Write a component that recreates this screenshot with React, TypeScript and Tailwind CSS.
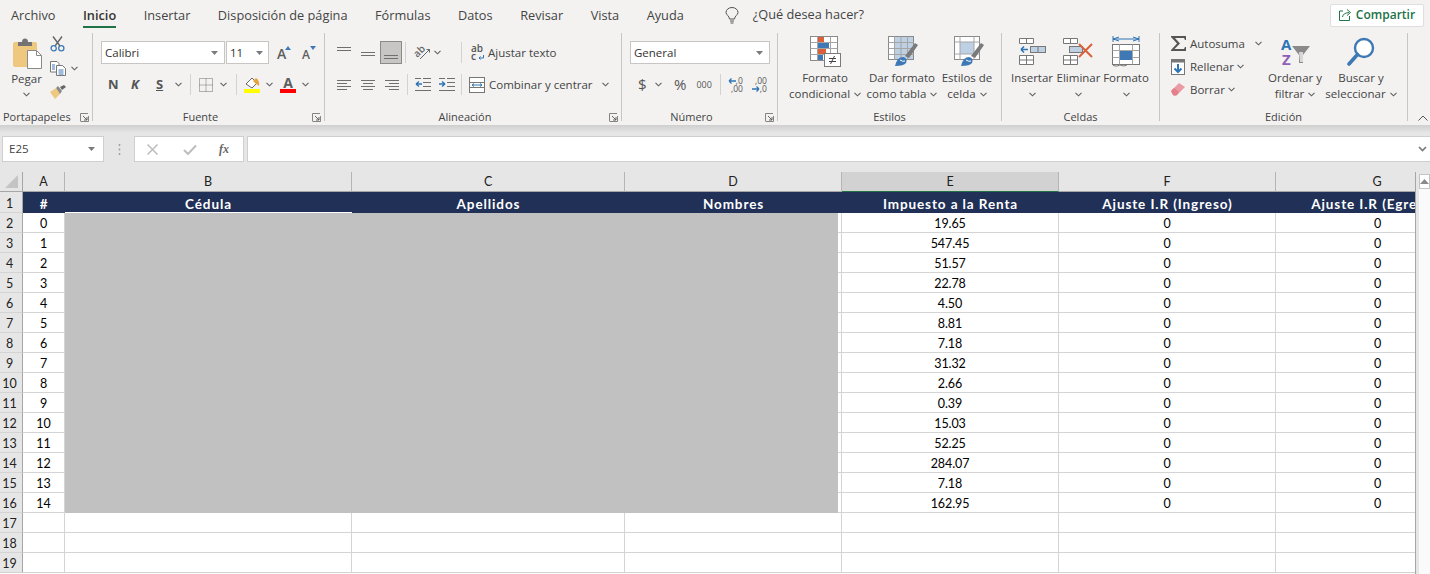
import type { ReactNode } from 'react';

const TABS = ['Archivo', 'Inicio', 'Insertar', 'Disposición de página', 'Fórmulas', 'Datos', 'Revisar', 'Vista', 'Ayuda'];
const TAXES = ['19.65', '547.45', '51.57', '22.78', '4.50', '8.81', '7.18', '31.32', '2.66', '0.39', '15.03', '52.25', '284.07', '7.18', '162.95'];
const COLUMN_TEMPLATE = 'grid grid-cols-[23px_42px_287px_273px_217px_217px_217px_203px]';
const UI_FONT = "font-['Open_Sans',sans-serif]";
const SHEET_FONT = "font-['Lato',sans-serif]";
const CELL = 'flex items-center justify-center border-b border-[#d4d4d4] pt-[3px]';
const ROW_HEADER = 'flex items-center justify-center border-r border-b border-r-[#a6a6a6] border-b-[#d4d4d4] bg-[#e6e6e6] pr-[3px] pt-[3px] text-[12.5px] text-[#222]';

/** Small ribbon dropdown caret. */
function Caret({ className = '' }: { className?: string }) {
  return (
    <svg width="7" height="5" viewBox="0 0 7 5" className={`shrink-0 ${className}`}>
      <path d="M0.5 0.8 L3.5 3.8 L6.5 0.8" fill="none" stroke="#5f5f5f" strokeWidth="1.1" />
    </svg>
  );
}

/** Solid triangle used by the combo boxes. */
function ComboArrow() {
  return (
    <svg width="7" height="4" viewBox="0 0 7 4" className="shrink-0">
      <path d="M0 0 H7 L3.5 4 Z" fill="#7a7a7a" />
    </svg>
  );
}

function Launcher() {
  return (
    <svg width="9" height="9" viewBox="0 0 9 9" className="absolute right-[3px] top-[4px]">
      <path d="M0.5 8 V0.5 H8 M0.5 8.5 H8.5 V3" fill="none" stroke="#777" strokeWidth="0.9" />
      <path d="M3 3 L7 7 M7 4 V7 H4" fill="none" stroke="#555" strokeWidth="0.9" />
    </svg>
  );
}

function Lines({ rows, className = '' }: { rows: string[]; className?: string }) {
  return (
    <svg width="16" height="14" viewBox="0 0 16 14" className={`shrink-0 ${className}`}>
      {rows.map((d) => (
        <path key={d} d={d} stroke="#6f6f6f" strokeWidth="1" fill="none" />
      ))}
    </svg>
  );
}

function PasteIcon() {
  return (
    <svg width="30" height="31" viewBox="0 0 30 31">
      <rect x="0" y="4" width="24" height="25" rx="2" fill="#edc87e" />
      <path d="M5 8 V4 H9 Q9 0.5 12 0.5 Q15 0.5 15 4 H19 V8 Z" fill="#737373" />
      <path d="M14.5 12.5 H23.5 L28.5 17.5 V30.5 H14.5 Z" fill="#fff" stroke="#8a8a8a" />
      <path d="M23.5 12.5 V17.5 H28.5" fill="none" stroke="#8a8a8a" />
    </svg>
  );
}

function ScissorsIcon() {
  return (
    <svg width="15" height="16" viewBox="0 0 15 16">
      <path d="M3 0.5 L10 10 M12 0.5 L5 10" stroke="#666" strokeWidth="1.4" fill="none" />
      <circle cx="3.7" cy="12.3" r="2.6" fill="none" stroke="#3f79b5" strokeWidth="1.3" />
      <circle cx="11.3" cy="12.3" r="2.6" fill="none" stroke="#3f79b5" strokeWidth="1.3" />
    </svg>
  );
}

function CopyIcon() {
  return (
    <svg width="16" height="15" viewBox="0 0 16 15">
      <path d="M0.5 0.5 H7 L9 2.5 V11 H0.5 Z" fill="#fff" stroke="#777" />
      <path d="M6.5 4.5 H12.5 L15.5 7.5 V14.5 H6.5 Z" fill="#fff" stroke="#777" />
      <path d="M2 4 H5 M2 6 H5 M2 8 H5 M8.5 9 H13.5 M8.5 11 H13.5 M8.5 13 H13.5" stroke="#3f79b5" />
    </svg>
  );
}

function BrushIcon() {
  return (
    <svg width="16" height="15" viewBox="0 0 16 15">
      <path d="M0 7 L6 3 L10 9 L5 14 Z" fill="#edc87e" />
      <path d="M6 3 L8 1 L12 6 L10 9 Z" fill="#8a8a8a" />
      <path d="M10 2 L14 0 L16 2 L12 5 Z" fill="#666" />
    </svg>
  );
}

function GrowFont({ up }: { up: boolean }) {
  return (
    <span className={`relative flex h-[16px] w-[14px] items-end ${UI_FONT} font-semibold leading-none text-[#5e5e5e] ${up ? 'text-[14px]' : 'text-[12px]'}`}>
      A
      <svg width="6" height="4" viewBox="0 0 6 4" className="absolute right-0 top-[1px]">
        <path d={up ? 'M0 4 H6 L3 0 Z' : 'M0 0 H6 L3 4 Z'} fill="#3f79b5" />
      </svg>
    </span>
  );
}

function BordersIcon() {
  return (
    <svg width="14" height="14" viewBox="0 0 14 14">
      <path d="M0.5 0.5 H13.5 V13.5 H0.5 Z M7 0.5 V13.5 M0.5 7 H13.5" fill="none" stroke="#6f6f6f" strokeDasharray="1 1" />
    </svg>
  );
}

function FillIcon() {
  return (
    <svg width="17" height="16" viewBox="0 0 17 16">
      <path d="M2 7 L8 1 L13 6 L8 11 Z" fill="#fff" stroke="#666" />
      <path d="M12 1 Q16 4 15 9 Q12 7 9 4 Z" fill="#e8a33d" />
      <rect x="0" y="12" width="16" height="4" fill="#ffff00" />
    </svg>
  );
}

function FontColorIcon() {
  return (
    <span className="flex w-[16px] flex-col items-center">
      <span className={`${UI_FONT} text-[14px] font-bold leading-[13px] text-[#5e5e5e]`}>A</span>
      <span className="h-[4px] w-[16px] bg-[#ff0000]" />
    </span>
  );
}

function OrientationIcon() {
  return (
    <svg width="17" height="15" viewBox="0 0 17 15">
      <text x="0" y="11" fontSize="10" fontWeight="600" fontFamily="Open Sans, sans-serif" fill="#666" transform="rotate(-45 4 8)">ab</text>
      <path d="M6 14 L15.5 4.5 M15.5 4.5 H12.5 M15.5 4.5 V7.5" fill="none" stroke="#666" />
    </svg>
  );
}

function IndentIcon({ reverse }: { reverse: boolean }) {
  return (
    <svg width="16" height="13" viewBox="0 0 16 13">
      <path d="M8 0.5 H16 M8 4.5 H16 M8 8.5 H16 M0 12.5 H16 M0 0.5 H6" stroke="#6f6f6f" fill="none" />
      <path d={reverse ? 'M1 6 H7 M1 6 L4 3.5 M1 6 L4 8.5' : 'M0 6 H6 M6 6 L3 3.5 M6 6 L3 8.5'} stroke="#2f75b5" strokeWidth="1.4" fill="none" />
    </svg>
  );
}

function WrapIcon() {
  return (
    <span className={`relative block h-[18px] w-[13px] ${UI_FONT} text-[10px] font-semibold leading-[8px] text-[#555]`}>
      ab
      <br />c
      <svg width="6" height="5" viewBox="0 0 6 5" className="absolute bottom-[2px] right-0">
        <path d="M5.5 0 V3 H1 M2.5 1.5 L1 3 L2.5 4.5" fill="none" stroke="#2f75b5" />
      </svg>
    </span>
  );
}

function MergeIcon() {
  return (
    <svg width="16" height="16" viewBox="0 0 16 16">
      <rect x="0.5" y="0.5" width="15" height="15" fill="#fff" stroke="#777" />
      <path d="M0.5 5.5 H15.5 M0.5 10.5 H15.5" stroke="#777" />
      <path d="M3 8 H13 M3 8 L5 6.5 M3 8 L5 9.5 M13 8 L11 6.5 M13 8 L11 9.5" stroke="#2f75b5" fill="none" />
    </svg>
  );
}

function DecimalIcon({ more }: { more: boolean }) {
  return (
    <span className="relative block h-[16px] w-[15px] text-[8.5px] leading-[8px] text-[#555]">
      <span className="absolute right-0 top-0">{more ? ',00' : ',0'}</span>
      <span className="absolute bottom-0 right-0">{more ? ',0' : ',00'}</span>
      <svg width="8" height="6" viewBox="0 0 8 6" className={`absolute left-0 ${more ? 'bottom-[1px]' : 'top-[1px]'}`}>
        <path d={more ? 'M0 3 H7 M7 3 L4.5 0.5 M7 3 L4.5 5.5' : 'M8 3 H1 M1 3 L3.5 0.5 M1 3 L3.5 5.5'} stroke="#2f75b5" strokeWidth="1.3" fill="none" />
      </svg>
    </span>
  );
}

function ConditionalIcon() {
  return (
    <svg width="31" height="31" viewBox="0 0 31 31">
      <rect x="0.5" y="0.5" width="27" height="24" fill="#fff" stroke="#8a8a8a" />
      <path d="M0.5 6.5 H27.5 M0.5 12.5 H27.5 M0.5 18.5 H27.5 M7.5 0.5 V24.5 M20.5 0.5 V24.5" stroke="#a5a5a5" />
      <rect x="8" y="1" width="6" height="5" fill="#d9603b" />
      <rect x="8" y="7" width="11" height="5" fill="#3f79b5" />
      <rect x="8" y="13" width="8" height="5" fill="#d9603b" />
      <rect x="8" y="19" width="5" height="5" fill="#3f79b5" />
      <rect x="14.5" y="17.5" width="16" height="13" fill="#fff" stroke="#7a7a7a" />
      <path d="M19 22.5 H26 M19 25.5 H26 M24.5 20 L20.5 28" stroke="#444" fill="none" />
    </svg>
  );
}

function TableStyleIcon({ solid, className = '' }: { solid: boolean; className?: string }) {
  return (
    <svg width="31" height="31" viewBox="0 0 31 31" className={className}>
      <rect x="0.5" y="0.5" width="25" height="23" fill="#fff" stroke="#8a8a8a" />
      <rect x="6" y={solid ? 6 : 1} width={solid ? 14 : 19} height={solid ? 12 : 22} fill="#bdd0e4" />
      {!solid && <path d="M0.5 6.5 H25.5 M0.5 12.5 H25.5 M0.5 18.5 H25.5 M6.5 0.5 V23.5 M13 0.5 V23.5 M19.5 0.5 V23.5" stroke="#a5a5a5" />}
      {solid && <path d="M0.5 6 H25.5 M0.5 18 H25.5 M6 0.5 V23.5 M20 0.5 V23.5" stroke="#a5a5a5" />}
      <path d="M17 20 L27 7 L30 9 L21 22 Z" fill="#7a7a7a" />
      <path d="M7 30 Q9 21 15 21 Q20 22 18 27 Q16 30 7 30 Z" fill="#3f79b5" />
      <path d="M12 24 Q15 26 17 25" stroke="#fff" fill="none" />
    </svg>
  );
}

function InsertIcon() {
  return (
    <svg width="27" height="27" viewBox="0 0 27 27">
      <path d="M0.5 0.5 H14.5 V5.5 H0.5 Z M7.5 0.5 V5.5 M0.5 17.5 H14.5 V26.5 H0.5 Z M7.5 17.5 V26.5 M0.5 22 H14.5" fill="#fff" stroke="#777" />
      <rect x="11.5" y="8.5" width="15" height="6" fill="#bdd0e4" stroke="#777" />
      <path d="M19 8.5 V14.5" stroke="#777" />
      <path d="M9 11.5 H2 M2 11.5 L5 8.5 M2 11.5 L5 14.5" stroke="#2f75b5" strokeWidth="1.6" fill="none" />
    </svg>
  );
}

function DeleteIcon() {
  return (
    <svg width="31" height="27" viewBox="0 0 31 27">
      <path d="M0.5 0.5 H14.5 V5.5 H0.5 Z M7.5 0.5 V5.5 M0.5 17.5 H14.5 V26.5 H0.5 Z M7.5 17.5 V26.5 M0.5 22 H14.5" fill="#fff" stroke="#777" />
      <rect x="6.5" y="8.5" width="13" height="6" fill="#bdd0e4" stroke="#777" />
      <path d="M16 6 L29 19 M29 6 L16 19" stroke="#d9603b" strokeWidth="2" fill="none" />
    </svg>
  );
}

function FormatIcon() {
  return (
    <svg width="28" height="31" viewBox="0 0 28 31">
      <path d="M1 3 H27 M1 0 V6 M27 0 V6 M7 1 L1 3 L7 5 M21 1 L27 3 L21 5" stroke="#2f75b5" fill="none" />
      <rect x="0.5" y="8.5" width="27" height="20" fill="#fff" stroke="#777" />
      <path d="M0.5 14.5 H27.5 M0.5 21.5 H27.5 M7.5 8.5 V28.5 M20.5 8.5 V28.5" stroke="#a5a5a5" />
      <rect x="8" y="15" width="12" height="9" fill="#3f79b5" />
      <path d="M1 29.5 Q5 31 8 29 Q12 31 15 29" fill="none" stroke="#777" />
    </svg>
  );
}

function SigmaIcon() {
  return (
    <svg width="15" height="15" viewBox="0 0 15 15">
      <path d="M0 0 H15 V4 H14 L13 2 H4 L9 7.5 L3.5 13 H13 L14 11 H15 V15 H0 V14 L6 7.5 L0 1 Z" fill="#555" />
    </svg>
  );
}

function FillDownIcon() {
  return (
    <svg width="14" height="16" viewBox="0 0 14 16">
      <rect x="0.5" y="0.5" width="13" height="15" fill="#fff" stroke="#777" />
      <rect x="0.5" y="0.5" width="13" height="3" fill="#777" />
      <path d="M7 5 V13 M3.5 9.5 L7 13 L10.5 9.5" stroke="#2f75b5" strokeWidth="2" fill="none" />
    </svg>
  );
}

function EraserIcon() {
  return (
    <svg width="14" height="13" viewBox="0 0 14 13">
      <path d="M0 8 L8 0 L14 4 L6 12 Q4 13 2 12 Z" fill="#ea9aa3" />
      <path d="M0 8 L3 5 L8 9 L6 12 Q4 13 2 12 Z" fill="#e57f8b" />
    </svg>
  );
}

function SortFilterIcon() {
  return (
    <svg width="30" height="30" viewBox="0 0 30 30">
      <text x="1" y="13" fontSize="15" fontWeight="700" fontFamily="Open Sans, sans-serif" fill="#2f75b5">A</text>
      <text x="2" y="28" fontSize="15" fontWeight="700" fontFamily="Open Sans, sans-serif" fill="#8e5fb5">Z</text>
      <path d="M12 9 H30 L23 18 V26 H19 V18 Z" fill="#8a8a8a" />
      <path d="M19 15 L23 15 L23 25 H20 Z" fill="#d8d8d8" />
    </svg>
  );
}

function SearchIcon() {
  return (
    <svg width="28" height="29" viewBox="0 0 28 29">
      <circle cx="17" cy="11" r="9" fill="#fff" stroke="#3f79b5" strokeWidth="2.4" />
      <path d="M10.5 17.5 L2 27" stroke="#3f79b5" strokeWidth="3.6" strokeLinecap="round" />
    </svg>
  );
}

function Divider({ className = '' }: { className?: string }) {
  return <span className={`h-[21px] w-px shrink-0 bg-[#d4d2d0] ${className}`} />;
}

/** One ribbon section with its caption and the separator on its right. */
function Group({ width, label, labelClass = '', launcher, children }: { width: string; label: string; labelClass?: string; launcher?: boolean; children: ReactNode }) {
  return (
    <section className={`flex h-[88px] shrink-0 flex-col border-r border-[#c8c6c4] ${width}`}>
      <div className="min-h-0 flex-1">{children}</div>
      <div className={`relative -mb-1 h-4 text-center text-[11px] leading-4 text-[#444] ${labelClass}`}>
        {label}
        {launcher && <Launcher />}
      </div>
    </section>
  );
}

/** Tall button: icon on top, two lines of text below. */
function BigButton({ width, icon, line1, line2 }: { width: string; icon: ReactNode; line1: string; line2?: string }) {
  return (
    <div className={`flex flex-col items-center text-[11.5px] leading-4 text-[#444] ${width}`}>
      <div className="flex h-[37px] items-center">{icon}</div>
      <span className="whitespace-nowrap">{line1}</span>
      <span className="flex h-4 items-center gap-1 whitespace-nowrap">
        {line2}
        <Caret />
      </span>
    </div>
  );
}

function Combo({ width, text }: { width: string; text: string }) {
  return (
    <div className={`flex h-[23px] items-center justify-between border border-[#c8c6c4] bg-white pl-[3px] pr-[6px] text-[11.5px] text-[#333] ${width}`}>
      {text}
      <ComboArrow />
    </div>
  );
}

function Ribbon() {
  return (
    <div className={`flex h-[95px] bg-[#f3f2f1] pt-[3px] ${UI_FONT}`}>
      <Group width="w-[93px]" label="Portapapeles" labelClass="pl-[3px] text-left" launcher>
        <div className="flex">
          <div className="flex w-[50px] flex-col items-center pl-[3px] text-[11.5px] text-[#444]">
            <div className="flex h-[36px] items-end pl-[3px]"><PasteIcon /></div>
            <span className="mt-[1px] leading-[17px]">Pegar</span>
            <Caret className="mt-[5px]" />
          </div>
          <div className="flex flex-col gap-[9px] pt-[3px]">
            <ScissorsIcon />
            <div className="flex items-center gap-[3px]"><CopyIcon /><Caret className="ml-[2px]" /></div>
            <BrushIcon />
          </div>
        </div>
      </Group>

      <Group width="w-[232px]" label="Fuente" labelClass="pr-[16px]" launcher>
        <div className="flex items-center pl-[8px] pt-[8px]">
          <Combo width="w-[124px]" text="Calibri" />
          <div className="ml-[1px] flex h-[23px] w-[43px] items-center justify-between border border-[#c8c6c4] bg-white pl-[3px] pr-[5px] text-[11.5px] text-[#333]">11<ComboArrow /></div>
          <div className="ml-[8px] flex gap-[11px]"><GrowFont up /><GrowFont up={false} /></div>
        </div>
        <div className="mt-[9px] flex h-[23px] items-center pl-[15px] text-[13px] font-bold text-[#555]">
          <span className="w-[23px]">N</span>
          <span className="w-[25px] italic">K</span>
          <span className="w-[18px] underline">S</span>
          <Caret className="ml-[1px]" />
          <Divider className="ml-[8px]" />
          <span className="ml-[8px]"><BordersIcon /></span>
          <Caret className="ml-[7px]" />
          <Divider className="ml-[9px]" />
          <span className="ml-[7px]"><FillIcon /></span>
          <Caret className="ml-[5px]" />
          <span className="ml-[7px]"><FontColorIcon /></span>
          <Caret className="ml-[6px]" />
        </div>
      </Group>

      <Group width="w-[297px]" label="Alineación" labelClass="pr-[16px]" launcher>
        <div className="flex h-[31px] items-end pl-[11px]">
          <div className="flex h-[23px] items-center">
            <Lines rows={['M1 1.5 H15', 'M1 4.5 H15']} />
            <Lines className="ml-[8px]" rows={['M1 6.5 H15', 'M1 9.5 H15']} />
            <span className="ml-[4px] flex h-[23px] w-[22px] items-center justify-center border border-[#8a8a8a] bg-[#c8c6c4]"><Lines rows={['M1 9.5 H15', 'M1 12.5 H15']} /></span>
            <Divider className="ml-[3px]" />
            <span className="ml-[8px]"><OrientationIcon /></span>
            <Caret className="ml-[3px]" />
            <Divider className="ml-[20px]" />
            <span className="ml-[9px]"><WrapIcon /></span>
            <span className="ml-[4px] text-[11.5px] text-[#444]">Ajustar texto</span>
          </div>
        </div>
        <div className="mt-[9px] flex h-[23px] items-center pl-[11px]">
          <Lines rows={['M1 2.5 H15', 'M1 5.5 H11', 'M1 8.5 H15', 'M1 11.5 H11']} />
          <Lines className="ml-[8px]" rows={['M1 2.5 H15', 'M3 5.5 H13', 'M1 8.5 H15', 'M3 11.5 H13']} />
          <Lines className="ml-[8px]" rows={['M1 2.5 H15', 'M5 5.5 H15', 'M1 8.5 H15', 'M5 11.5 H15']} />
          <Divider className="ml-[7px]" />
          <span className="ml-[7px]"><IndentIcon reverse /></span>
          <span className="ml-[8px]"><IndentIcon reverse={false} /></span>
          <Divider className="ml-[6px]" />
          <span className="ml-[7px]"><MergeIcon /></span>
          <span className="ml-[4px] whitespace-nowrap text-[11.5px] text-[#444]">Combinar y centrar</span>
          <Caret className="ml-[9px]" />
        </div>
      </Group>

      <Group width="w-[156px]" label="Número" labelClass="pr-[16px]" launcher>
        <div className="pl-[8px] pt-[8px]"><Combo width="w-[140px]" text="General" /></div>
        <div className="mt-[9px] flex h-[23px] items-center pl-[16px] text-[#555]">
          <span className="w-[8px] text-[15px] leading-none">$</span>
          <Caret className="ml-[9px]" />
          <span className="ml-[12px] text-[15px] leading-none">%</span>
          <span className="ml-[10px] text-[9px] leading-none">000</span>
          <Divider className="ml-[8px]" />
          <span className="ml-[7px]"><DecimalIcon more={false} /></span>
          <span className="ml-[9px]"><DecimalIcon more /></span>
        </div>
      </Group>

      <Group width="w-[224px]" label="Estilos">
        <div className="flex pl-[5px]">
          <BigButton width="w-[84px]" icon={<ConditionalIcon />} line1="Formato" line2="condicional" />
          <BigButton width="w-[70px]" icon={<TableStyleIcon solid={false} className="ml-[2px]" />} line1="Dar formato" line2="como tabla" />
          <BigButton width="w-[60px]" icon={<TableStyleIcon solid className="ml-[5px]" />} line1="Estilos de" line2="celda" />
        </div>
      </Group>

      <Group width="w-[158px]" label="Celdas">
        <div className="flex pl-[6px]">
          <BigButton width="w-[48px]" icon={<InsertIcon />} line1="Insertar" />
          <BigButton width="w-[45px]" icon={<DeleteIcon />} line1="Eliminar" />
          <BigButton width="w-[50px]" icon={<FormatIcon />} line1="Formato" />
        </div>
      </Group>

      <Group width="w-[248px]" label="Edición">
        <div className="flex">
          <div className="-mt-[1px] flex w-[107px] flex-col pl-[11px] text-[11.5px] leading-[23px] text-[#444]">
            <div className="flex h-[23px] items-center">
              <span className="w-[19px]"><SigmaIcon /></span>
              <span>Autosuma</span>
              <Caret className="ml-[10px]" />
            </div>
            <div className="flex h-[23px] items-center">
              <span className="w-[19px]"><FillDownIcon /></span>
              <span>Rellenar</span>
              <Caret className="ml-[3px]" />
            </div>
            <div className="flex h-[23px] items-center">
              <span className="w-[19px]"><EraserIcon /></span>
              <span>Borrar</span>
              <Caret className="ml-[3px]" />
            </div>
          </div>
          <BigButton width="w-[56px]" icon={<SortFilterIcon />} line1="Ordenar y" line2="filtrar" />
          <BigButton width="w-[76px]" icon={<SearchIcon />} line1="Buscar y" line2="seleccionar" />
        </div>
      </Group>

      <div className="flex flex-1 items-end justify-end pb-[4px] pr-[2px]">
        <svg width="10" height="6" viewBox="0 0 10 6"><path d="M0.5 5.5 L5 1 L9.5 5.5" fill="none" stroke="#555" /></svg>
      </div>
    </div>
  );
}

function TopTabs() {
  return (
    <div className={`flex h-[30px] items-center bg-[#f3f2f1] pl-[11px] pr-[6px] text-[12.75px] text-[#444] ${UI_FONT}`}>
      <nav className="flex h-full items-center gap-[27.5px]">
        {TABS.map((tab) => (
          <span
            key={tab}
            className={`relative whitespace-nowrap leading-[30px] ${tab === 'Inicio' ? 'font-semibold text-[#333] after:absolute after:inset-x-0 after:bottom-[2px] after:h-[2px] after:bg-[#217346]' : ''}`}
          >
            {tab}
          </span>
        ))}
      </nav>
      <svg width="14" height="17" viewBox="0 0 14 17" className="ml-[41px]">
        <path d="M4.5 12 C4.5 9 1 8 1 5.5 A6 5 0 0 1 13 5.5 C13 8 9.5 9 9.5 12 Z M5 14 H9 M5.5 16 H8.5" fill="none" stroke="#555" />
      </svg>
      <span className="ml-[14px]">¿Qué desea hacer?</span>
      <button type="button" className="ml-auto flex h-[23px] w-[94px] items-center justify-center gap-[4px] rounded-[2px] border border-[#e1dfdd] bg-white text-[12px] font-semibold text-[#217346]">
        <svg width="13" height="12" viewBox="0 0 13 12">
          <path d="M4 2 H0.5 V11.5 H10.5 V7 M3.5 8 Q4 4 10 3.5 M8 0.5 L11.5 3.5 L8 6.5" fill="none" stroke="#217346" />
        </svg>
        Compartir
      </button>
    </div>
  );
}

function FormulaBar() {
  return (
    <div className="h-[47px] bg-[#e6e6e6]">
      <div className="h-[8px] bg-gradient-to-b from-[#cfcfcf] to-[#e6e6e6]" />
      <div className="mt-[3px] flex h-[26px] items-stretch pl-[2px]">
        <div className={`flex w-[102px] items-center justify-between border border-[#cfcfcf] bg-white pl-[6px] pr-[8px] text-[11.5px] text-[#444] ${UI_FONT}`}>
          E25
          <ComboArrow />
        </div>
        <div className="flex w-[30px] items-center justify-center">
          <svg width="3" height="11" viewBox="0 0 3 11"><path d="M1.5 0 V2 M1.5 4.5 V6.5 M1.5 9 V11" stroke="#a0a0a0" strokeWidth="1.5" /></svg>
        </div>
        <div className="flex w-[110px] items-center border border-[#cfcfcf] bg-white pl-[12px]">
          <svg width="11" height="11" viewBox="0 0 11 11"><path d="M0.5 0.5 L10.5 10.5 M10.5 0.5 L0.5 10.5" stroke="#bdbdbd" strokeWidth="1.5" /></svg>
          <svg width="14" height="11" viewBox="0 0 14 11" className="ml-[25px]"><path d="M1 6 L5 10 L13 1.5" fill="none" stroke="#bdbdbd" strokeWidth="2" /></svg>
          <span className="ml-[22px] font-['Liberation_Serif',serif] text-[12px] font-bold italic text-[#666]">fx</span>
        </div>
        <div className="ml-[3px] flex flex-1 items-center justify-end border-y border-l border-[#cfcfcf] bg-white pr-[3px]">
          <svg width="9" height="6" viewBox="0 0 9 6"><path d="M1 1 L4.5 4.5 L8 1" fill="none" stroke="#777" strokeWidth="1.6" /></svg>
        </div>
      </div>
    </div>
  );
}

function Sheet() {
  const labels = ['A', 'B', 'C', 'D', 'E', 'F', 'G'];
  const titles = ['#', 'Cédula', 'Apellidos', 'Nombres', 'Impuesto a la Renta', 'Ajuste I.R (Ingreso)', 'Ajuste I.R (Egresos)'];
  const rows = Array.from({ length: 18 }, (_, i) => i);

  return (
    <div className={`relative w-[1416px] overflow-hidden border-r border-[#a6a6a6] text-[12.5px] leading-[14px] tracking-[-0.1px] text-black ${SHEET_FONT}`}>
      <div className={`${COLUMN_TEMPLATE} h-[20px] bg-[#e6e6e6] text-[#222]`}>
        <div className="flex items-center justify-center border-r border-b border-[#a6a6a6]">
          <svg width="13" height="13" viewBox="0 0 13 13"><path d="M13 0 V13 H0 Z" fill="#c4c4c4" /></svg>
        </div>
        {labels.map((label) => (
          <div
            key={label}
            className={`flex items-center justify-center border-b border-r pt-[1px] ${label === 'E' ? 'border-b-[#217346] bg-[#d2d2d2]' : 'border-b-[#a6a6a6]'} border-r-[#b5b5b5]`}
          >
            {label}
          </div>
        ))}
      </div>

      <div className={`${COLUMN_TEMPLATE} h-[21px]`}>
        <div className={ROW_HEADER}>1</div>
        {titles.map((title) => (
          <div key={title} className={`flex items-center justify-center overflow-hidden whitespace-nowrap bg-[#203057] pt-[3px] text-[13.5px] font-bold tracking-[0.9px] text-white ${title === 'Cédula' ? 'border-b border-white' : ''}`}>
            {title}
          </div>
        ))}
      </div>

      {rows.map((i) => (
        <div key={i} className={`${COLUMN_TEMPLATE} h-[20px]`}>
          <div className={ROW_HEADER}>{i + 2}</div>
          <div className={`${CELL} border-r`}>{i < 15 ? i : ''}</div>
          <div className={`${CELL} border-r`} />
          <div className={`${CELL} border-r`} />
          <div className={`${CELL} border-r`} />
          <div className={`${CELL} border-r`}>{TAXES[i]}</div>
          <div className={`${CELL} border-r`}>{i < 15 ? 0 : ''}</div>
          <div className={CELL}>{i < 15 ? 0 : ''}</div>
        </div>
      ))}

      {/* redacted personal data */}
      <div className="absolute left-[65px] top-[41px] h-[300px] w-[773px] bg-[#c1c1c1]" />
    </div>
  );
}

function ScrollBar() {
  return (
    <div className="flex-1 bg-[#e6e6e6] pt-[2px]">
      <div className="ml-[3px] flex h-[15px] items-center justify-center border border-[#c4c4c4] bg-white">
        <svg width="9" height="5" viewBox="0 0 9 5"><path d="M0 5 H9 L4.5 0 Z" fill="#8a8a8a" /></svg>
      </div>
      <div className="ml-[3px] h-[400px] bg-[#fafafa]" />
    </div>
  );
}

export default function App() {
  return (
    <div className="h-[574px] w-[1430px] overflow-hidden bg-white">
      <TopTabs />
      <Ribbon />
      <FormulaBar />
      <div className="flex">
        <Sheet />
        <ScrollBar />
      </div>
    </div>
  );
}
